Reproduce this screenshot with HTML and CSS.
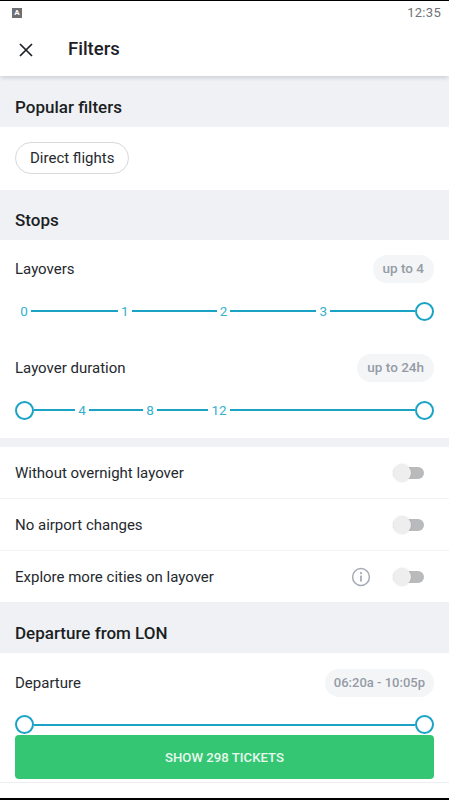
FILE: index.html
```html
<!DOCTYPE html>
<html lang="en">
<head>
  <meta charset="UTF-8">
  <title>Filters</title>
  <meta name="viewport" content="width=device-width, initial-scale=1.0">
  <link rel="stylesheet" href="styles.css">
</head>
<body>
<div class="screen">

  <!-- STATUS BAR -->
  <div class="status">
    <span class="status-icon">A</span>
    <span class="status-time">12:35</span>
  </div>

  <!-- APP BAR -->
  <header class="appbar">
    <svg class="close" width="16" height="16" viewBox="0 0 16 16">
      <path d="M2 2 L14 14 M14 2 L2 14" stroke="#1d2126" stroke-width="1.7" fill="none"/>
    </svg>
    <h1>Filters</h1>
  </header>

  <div class="section-title">Popular filters</div>
  <div class="chips">
    <span class="chip">Direct flights</span>
  </div>

  <div class="section-title">Stops</div>
  <div class="sliders">
    <div class="filter">
      <div class="filter-head">
        <span>Layovers</span>
        <span class="pill">up to 4</span>
      </div>
      <div class="slider">
        <span class="tick t0">0</span><i class="line l1"></i>
        <span class="tick">1</span><i class="line l2"></i>
        <span class="tick">2</span><i class="line l3"></i>
        <span class="tick">3</span><i class="line l4"></i>
        <b class="knob"></b>
      </div>
    </div>
    <div class="filter second">
      <div class="filter-head">
        <span>Layover duration</span>
        <span class="pill">up to 24h</span>
      </div>
      <div class="slider">
        <b class="knob"></b><i class="line d1"></i>
        <span class="tick">4</span><i class="line d2"></i>
        <span class="tick">8</span><i class="line d3"></i>
        <span class="tick t12">12</span><i class="line grow"></i>
        <b class="knob"></b>
      </div>
    </div>
  </div>

  <div class="divider"></div>

  <div class="row">
    <span class="row-label">Without overnight layover</span>
    <span class="switch"></span>
  </div>
  <div class="row">
    <span class="row-label">No airport changes</span>
    <span class="switch"></span>
  </div>
  <div class="row row-last">
    <span class="row-label">Explore more cities on layover</span>
    <svg class="info" width="20" height="20" viewBox="0 0 20 20">
      <circle cx="10" cy="10" r="8.4" stroke="#a4abb5" stroke-width="1.5" fill="none"/>
      <circle cx="10" cy="6.2" r="1.1" fill="#a4abb5"/>
      <rect x="9.1" y="8.6" width="1.8" height="6" fill="#a4abb5"/>
    </svg>
    <span class="switch"></span>
  </div>

  <div class="section-title">Departure from LON</div>
  <div class="filter departure">
    <div class="filter-head">
      <span>Departure</span>
      <span class="pill">06:20a - 10:05p</span>
    </div>
    <div class="slider">
      <b class="knob"></b><i class="line grow"></i><b class="knob"></b>
    </div>
  </div>

  <div class="bottom">
    <button class="show-btn">SHOW 298 TICKETS</button>
  </div>
</div>
</body>
</html>
```

FILE: styles.css
```css
html, body { margin: 0; padding: 0; background: #fff; }

.screen {
  position: relative;
  width: 449px;
  height: 800px;
  overflow: hidden;
  box-sizing: border-box;
  border-top: 1px solid #000;
  border-bottom: 2px solid #000;
  background: #fff;
  font-family: Roboto, sans-serif;
  color: #25292e;
}

.status {
  display: flex;
  justify-content: space-between;
  align-items: center;
  height: 23px;
  padding: 0 8px 0 12px;
}

.status-icon {
  width: 10px;
  height: 10px;
  background: #6d6f72;
  color: #fff;
  font-size: 8px;
  font-weight: 700;
  line-height: 10px;
  text-align: center;
}

.status-time { font-size: 13px; color: #6f7276; letter-spacing: 0.3px; }

.appbar {
  position: relative;
  display: flex;
  align-items: center;
  height: 52px;
  padding-left: 18px;
  background: #fff;
  box-shadow: 0 3px 4px -1px rgba(30, 40, 60, 0.16);
}

.appbar h1 {
  margin: 0 0 2px 34px;
  font-size: 18.5px;
  font-weight: 500;
  color: #1d2126;
}

.section-title {
  display: flex;
  align-items: center;
  box-sizing: border-box;
  height: 50.5px;
  padding: 11px 0 0 15px;
  background: #eff1f4;
  font-size: 17px;
  font-weight: 500;
  color: #1b1f24;
}

.chips { height: 63px; padding: 15px 15px 0; box-sizing: border-box; }

.chip {
  display: inline-block;
  height: 30px;
  padding: 0 14px;
  border: 1px solid #d7d9dc;
  border-radius: 16px;
  font-size: 15px;
  line-height: 30px;
}

.sliders { height: 198px; }

.filter { padding: 0 15px; }

.filter-head {
  display: flex;
  justify-content: space-between;
  align-items: center;
  height: 28px;
  padding-top: 15px;
  font-size: 15px;
}

.second { padding-top: 18px; }
.second .filter-head { padding-top: 15px; }

.pill {
  height: 28px;
  padding: 0 10px;
  border-radius: 14px;
  background: #f4f5f7;
  color: #949ba6;
  font-size: 13.5px;
  font-weight: 500;
  line-height: 27px;
}

.slider {
  display: flex;
  align-items: center;
  height: 20px;
  margin-top: 18px;
}

.tick {
  box-sizing: border-box;
  width: 14px;
  color: #35b0d0;
  font-size: 13.5px;
  text-align: center;
}

.t0 { width: 16px; padding-left: 2px; }
.t12 { width: 22px; }

.line { display: block; height: 2px; background: #1ba3c6; }
.l1 { width: 87px; }
.l2 { width: 85px; }
.l3 { width: 86px; }
.l4 { width: 85px; }
.d1 { width: 41px; }
.d2 { width: 54px; }
.d3 { width: 51px; }
.grow { flex: 1; }

.knob {
  flex: none;
  box-sizing: border-box;
  width: 19px;
  height: 19px;
  border: 2px solid #1ba3c6;
  border-radius: 50%;
  background: #fff;
}

.divider { height: 9px; background: #eff1f4; }

.row {
  display: flex;
  align-items: center;
  height: 52px;
  box-sizing: border-box;
  padding: 0 25px 0 15px;
  border-bottom: 1px solid #f1f2f4;
  font-size: 15px;
}

.row-label { flex: 1; }
.row-last { height: 51px; border-bottom: none; }

.switch {
  position: relative;
  display: block;
  width: 31px;
  height: 12px;
  border-radius: 6px;
  background: #b9babb;
}

.switch::before {
  content: "";
  position: absolute;
  left: 0;
  top: -3px;
  width: 18px;
  height: 18px;
  border-radius: 50%;
  background: #eeeeee;
  box-shadow: 0 0 2px rgba(0, 0, 0, 0.12);
}

.info { margin-right: 22px; }

.departure .filter-head { padding-top: 16.5px; }
.departure .pill { padding: 0 9px; font-size: 13px; }
.departure .slider { margin-top: 17.5px; }

.bottom {
  position: absolute;
  left: 0;
  right: 0;
  bottom: 0;
  height: 63px;
  box-sizing: border-box;
  padding: 0 15px;
}

.bottom::after {
  content: "";
  position: absolute;
  left: 0;
  right: 0;
  bottom: 15px;
  height: 1px;
  background: #eceef0;
}

.show-btn {
  display: block;
  width: 100%;
  height: 44px;
  border: none;
  border-radius: 4px;
  background: #35c673;
  color: #e8f8ee;
  font-family: Roboto, sans-serif;
  font-size: 13.2px;
  font-weight: 500;
}
```
